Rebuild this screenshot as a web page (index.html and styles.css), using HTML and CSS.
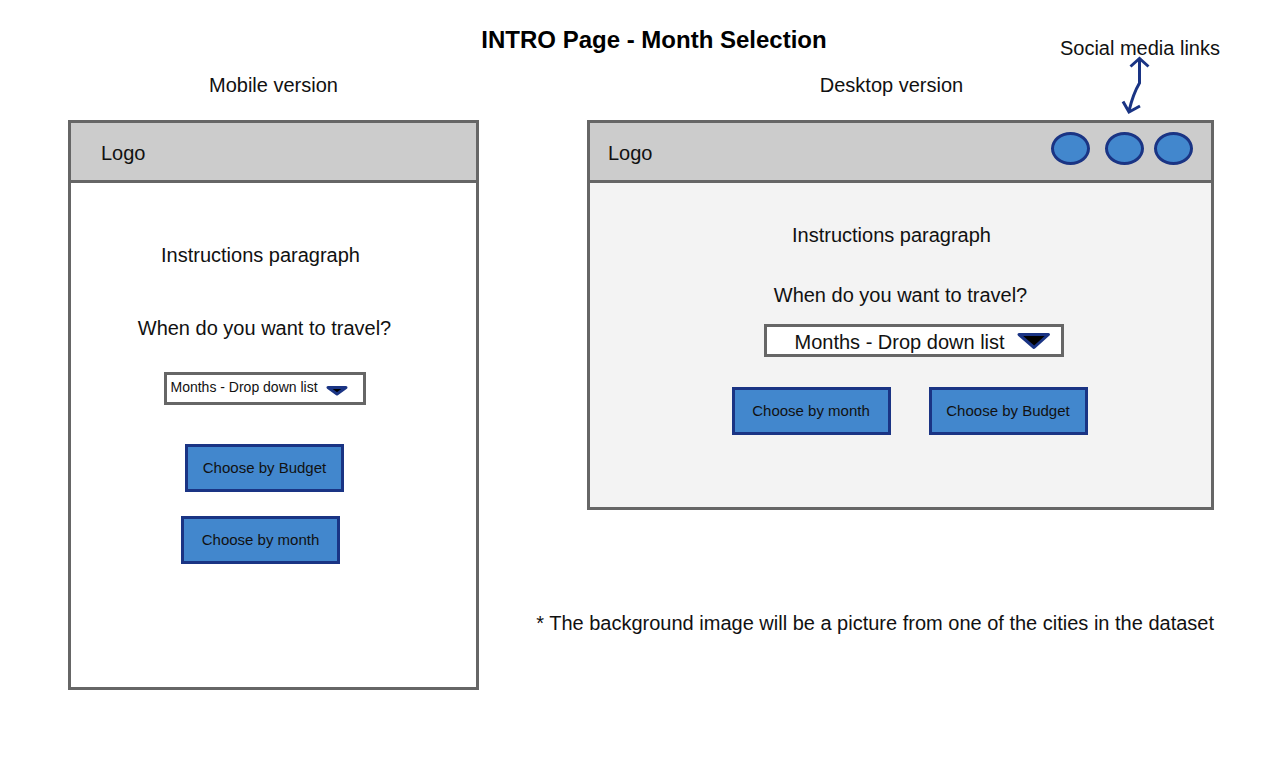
FILE: index.html
```html
<!DOCTYPE html>
<html lang="en">
<head>
<meta charset="utf-8">
<meta name="viewport" content="width=device-width, initial-scale=1">
<title>INTRO Page - Month Selection</title>
<link rel="stylesheet" href="styles.css">
</head>
<body>
<header class="board-header">
  <h1 class="board-title">INTRO Page - Month Selection</h1>
  <div class="callout">
    <span>Social media links</span>
    <svg class="callout-arrow" width="30" height="60" viewBox="0 0 30 60" aria-hidden="true">
      <path d="M19.5 4V28Q13 39 9 56M10.5 11.5L19.5 3.5L28.5 11.5M3 46.5L9 57L20 51"/>
    </svg>
  </div>
</header>
<main class="board">
  <section class="version">
    <h2 class="version-name">Mobile version</h2>
    <div class="frame">
      <div class="bar bar-mobile"><span>Logo</span></div>
      <form class="content content-mobile">
        <p class="line shift-left-more">Instructions paragraph</p>
        <label class="line question shift-left" for="month-mobile">When do you want to travel?</label>
        <div class="picker picker-mobile shift-left">
          <select id="month-mobile"><option>Months - Drop down list</option></select>
          <svg class="arrow" width="24" height="14" viewBox="0 0 24 14" aria-hidden="true"><path d="M3 3.5H21L12 10Z"/></svg>
        </div>
        <button class="choice shift-left" type="button">Choose by Budget</button>
        <button class="choice shift-left-more" type="button">Choose by month</button>
      </form>
    </div>
  </section>
  <section class="version">
    <h2 class="version-name shift-left">Desktop version</h2>
    <div class="frame frame-desktop">
      <div class="bar bar-desktop">
        <span>Logo</span>
        <nav class="social" aria-label="Social media">
          <a class="dot dot-first" href="#" aria-label="Social link 1"></a>
          <a class="dot" href="#" aria-label="Social link 2"></a>
          <a class="dot" href="#" aria-label="Social link 3"></a>
        </nav>
      </div>
      <form class="content content-desktop">
        <p class="line shift-left">Instructions paragraph</p>
        <label class="line question" for="month-desktop">When do you want to travel?</label>
        <div class="picker picker-desktop shift-right-more">
          <select id="month-desktop"><option>Months - Drop down list</option></select>
          <svg class="arrow" width="36" height="24" viewBox="0 0 36 24" aria-hidden="true"><path d="M3 3.5H32.5L18 16.5Z"/></svg>
        </div>
        <div class="choices shift-right">
          <button class="choice" type="button">Choose by month</button>
          <button class="choice" type="button">Choose by Budget</button>
        </div>
      </form>
    </div>
    <p class="note">* The background image will be a picture from one of the cities in the dataset</p>
  </section>
</main>
</body>
</html>
```
FILE: styles.css
```css
* { box-sizing: border-box; }

body {
  margin: 0;
  background: #fff;
  color: #111;
  font: 20px/24px "Liberation Sans", Arial, sans-serif;
}

h1, h2, p { margin: 0; }

.board-header {
  position: relative;
  padding: 24px 0 17px 40px;
  text-align: center;
}

.board-title {
  color: #000;
  font-size: 24px;
  line-height: 32px;
}

.callout {
  position: absolute;
  top: 36px;
  right: 48px;
}

.callout-arrow {
  position: absolute;
  top: 19px;
  left: 60px;
}

.callout-arrow path {
  fill: none;
  stroke: #1a3484;
  stroke-width: 3;
}

.board {
  display: grid;
  grid-template-columns: 411fr 627fr;
  gap: 108px;
  padding: 0 54px 0 68px;
}

.version {
  display: flex;
  flex-direction: column;
  align-items: center;
  min-width: 0;
}

.version-name {
  font-size: 20px;
  font-weight: 400;
}

.frame {
  width: 100%;
  margin-top: 23px;
  border: 3px solid #666;
}

.frame-desktop { background: #f3f3f3; }

.bar {
  display: flex;
  justify-content: space-between;
  height: 60px;
  border-bottom: 3px solid #666;
  background: #ccc;
}

.bar-mobile { padding: 18px 30px; }
.bar-desktop { padding: 18px 18px; }

.social {
  display: flex;
  gap: 10px;
  margin-top: -9px;
}

.dot {
  width: 39px;
  height: 33px;
  border: 3px solid #1a3484;
  border-radius: 50%;
  background: #4287cd;
}

.dot-first { margin-right: 5px; }

.content {
  display: flex;
  flex-direction: column;
  align-items: center;
}

.content-mobile { padding: 60px 0 123px; }
.content-desktop { padding: 40px 0 72px; }

.shift-left { margin-right: 18px; }
.shift-left-more { margin-right: 26px; }
.shift-right { margin-left: 18px; }
.shift-right-more { margin-left: 26px; }

.picker { position: relative; }

.picker select {
  display: block;
  width: 100%;
  height: 33px;
  border: 3px solid #666;
  border-radius: 0;
  background: #fff;
  color: #111;
  font: inherit;
  appearance: none;
}

.picker .arrow {
  position: absolute;
  pointer-events: none;
}

.arrow path {
  fill: #000;
  stroke: #1a3484;
  stroke-width: 3;
  stroke-linejoin: round;
}

.picker-mobile { width: 202px; font-size: 14px; }
.picker-mobile select { padding: 0 0 4px 4px; }
.picker-mobile .arrow { top: 12px; right: 17px; }

.picker-desktop { width: 300px; }
.picker-desktop select { padding: 2px 0 0 28px; }
.picker-desktop .arrow { top: 7px; right: 12px; }

.content-mobile .question { margin-top: 49px; }
.content-mobile .picker { margin-top: 32px; }
.content-mobile .picker + .choice { margin-top: 39px; }
.content-mobile .choice + .choice { margin-top: 24px; }

.content-desktop .question { margin-top: 36px; }
.content-desktop .picker { margin-top: 17px; }

.choices {
  display: flex;
  gap: 38px;
  margin-top: 30px;
}

.choice {
  width: 159px;
  height: 48px;
  padding: 0;
  border: 3px solid #1a3484;
  background: #4287cd;
  color: #111;
  font: inherit;
  font-size: 15px;
}

.note {
  align-self: flex-end;
  margin-top: 101px;
  white-space: nowrap;
}
```
